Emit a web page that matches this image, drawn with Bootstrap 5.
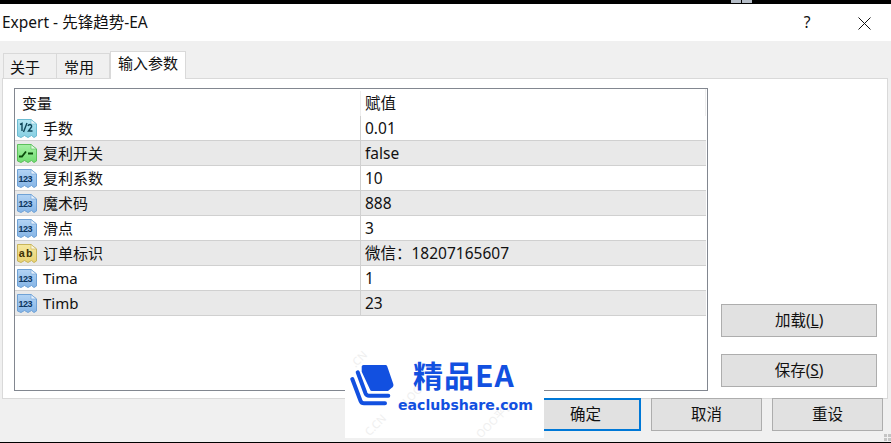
<!DOCTYPE html>
<html lang="zh">
<head>
    <meta charset="UTF-8">
    <title>Expert</title>
    <link href="https://cdn.jsdelivr.net/npm/bootstrap@5.3.2/dist/css/bootstrap.min.css" rel="stylesheet"/>
    <style>
        html, body { height: 443px; overflow: hidden; }
        body {
            background: #000;
            padding: 4px 0 1px;
            font-family: "Noto Sans", "Noto Sans CJK SC", sans-serif;
            font-size: 15px;
            color: #111;
            position: relative;
        }
        .dlg { height: 438px; background: #f0f0f0; display: flex; flex-direction: column; }
        .dlg-title { height: 37px; background: #fff; font-size: 15.5px; padding-left: 2px; }
        .dlg-help { width: 60px; text-align: center; }
        .dlg-close { width: 54px; text-align: center; }
        .dlg-tabs { height: 25px; margin-top: 12px; padding-left: 3px; }
        .dlg-tab { height: 25px; padding: 2px 0 0 7px; background: #f0f0f0; border: 1px solid #d9d9d9; border-bottom: 0; width: 54px; }
        .dlg-tab:first-child { padding-left: 6px; }
        .dlg-tab + .dlg-tab { margin-left: -1px; }
        .dlg-tab.on { background: #fff; padding-top: 0; height: 28px; width: 76px; margin-top: -2px; z-index: 1; margin-left: 0; }
        .dlg-panel { height: 321px; margin: 0 3px 0 2px; background: #fff; border: 1px solid #d9d9d9; padding: 9px 10px 7px 11px; gap: 13px; }
        .grid-box { width: 695px; border: 1px solid #828790; padding-right: 1px; display: flex; flex-direction: column; }
        .grid-row { height: 25px; display: flex; align-items: center; border-bottom: 1px solid #d0d0d0; flex: none; }
        .grid-row.alt { background: #e9e9e9; }
        .grid-row.head { height: 27px; border-bottom: 0; padding-top: 2px; border-right: 1px solid #eee; }
        .cell-a { width: 346px; height: 100%; display: flex; align-items: center; border-right: 1px solid #d0d0d0; flex: none; gap: 4px; }
        .head .cell-a { padding-left: 7px; border-right-color: #eee; }
        .cell-b { padding: 1px 0 0 4px; font-size: 15.5px; }
        .head .cell-b { padding-top: 0; }
        .ico { width: 24px; height: 22px; flex: none; }
        .side-btns { width: 156px; padding-top: 216px; gap: 17px; }
        .win-btn { background: #e1e1e1; border: 1px solid #adadad; height: 33px; line-height: 29px; text-align: center; width: 100%; padding: 0; color: #111; font-size: 15.5px; }
        .foot-btns { margin-top: -1px; padding-right: 8px; gap: 10px; justify-content: flex-end; }
        .foot-btns .win-btn { width: 111px; }
        .win-btn.def { border: 2px solid #0078d7; line-height: 27px; }
        .wm { position: absolute; left: 345px; top: 345px; width: 199px; height: 93px; background: #fff; color: #1250e0; }
        .wm-cn { position: absolute; left: 68px; top: 9px; font-family: "Noto Sans CJK SC", sans-serif; font-weight: 700; font-size: 30px; line-height: 40px; letter-spacing: 1px; }
        .wm-url { position: absolute; left: 53px; top: 50px; font-family: "DejaVu Sans", sans-serif; font-weight: 700; font-size: 14.1px; line-height: 20px; }
        .wm svg { position: absolute; left: 5px; top: 18px; }
        .wm-faint { position: absolute; color: #efefef; font-size: 11px; transform: rotate(-45deg); line-height: 12px; }
        .wm-f1 { left: 5px; top: 8px; }
        .wm-f2 { left: 18px; top: 74px; }
        .wm-f3 { left: 56px; top: 44px; }
        .wm-f4 { left: 126px; top: 68px; }
        .grip { position: absolute; right: 0; bottom: 2px; width: 7px; height: 7px; }
        .top-bit { position: absolute; top: 0; height: 3px; width: 10px; background: #b4bcc6; }
    </style>
</head>
<body>

<span class="top-bit" style="left: 731px"></span>
<span class="top-bit" style="left: 742px"></span>

<div class="dlg">
    <!-- title bar -->
    <div class="dlg-title d-flex align-items-center justify-content-between">
        <span>Expert - 先锋趋势-EA</span>
        <div class="d-flex">
            <span class="dlg-help">?</span>
            <span class="dlg-close">
                <svg width="13" height="13" viewBox="0 0 13 13"><path d="M.5 .5L12.5 12.5M12.5 .5L.5 12.5" stroke="#111" fill="none"/></svg>
            </span>
        </div>
    </div>

    <!-- tabs -->
    <div class="dlg-tabs d-flex">
        <div class="dlg-tab">关于</div>
        <div class="dlg-tab">常用</div>
        <div class="dlg-tab on">输入参数</div>
    </div>

    <div class="dlg-panel d-flex">
        <div class="grid-box" id="grid">
            <div class="grid-row head">
                <div class="cell-a">变量</div>
                <div class="cell-b">赋值</div>
            </div>
        </div>
        <div class="side-btns d-flex flex-column">
            <button class="win-btn">加载(<u>L</u>)</button>
            <button class="win-btn">保存(<u>S</u>)</button>
        </div>
    </div>

    <div class="foot-btns d-flex">
        <button class="win-btn def">确定</button>
        <button class="win-btn">取消</button>
        <button class="win-btn">重设</button>
    </div>
</div>

<!-- watermark logo -->
<div class="wm">
    <span class="wm-faint wm-f1">.CN</span>
    <span class="wm-faint wm-f2">C.CN</span>
    <span class="wm-faint wm-f3">LOO</span>
    <span class="wm-faint wm-f4">OOO平台</span>
    <svg width="45" height="44" viewBox="0 0 45 44">
        <path d="M11.7 3.5Q11.7 2 13.5 2H35.5Q36.7 2 37.2 3.2L43.3 21Q44 23.7 41.5 25L38 28H22Q20.5 28 20 26.5L11.7 8.7Z" fill="#1250e0"/>
        <path d="M7.7 9.3L15.6 30.5Q16.5 32.7 19 32.7H38.3" stroke="#1250e0" stroke-width="4" stroke-linecap="round" stroke-linejoin="round" fill="none"/>
        <path d="M2.3 16L10.6 38Q11.5 40.3 14 40.3H35" stroke="#1250e0" stroke-width="4" stroke-linecap="round" stroke-linejoin="round" fill="none"/>
    </svg>
    <div class="wm-cn">精品EA</div>
    <div class="wm-url">eaclubshare.com</div>
</div>

<svg class="grip" viewBox="0 0 7 7"><path d="M0 0h3v3H0zM4 0h3v3H4zM0 4h3v3H0zM4 4h3v3H4z" fill="#c4c4c4"/></svg>

<script>
    // one row per input parameter: [icon, name, value]
    const params = [
        ["frac", "手数", "0.01"],
        ["bool", "复利开关", "false"],
        ["num", "复利系数", "10"],
        ["num", "魔术码", "888"],
        ["num", "滑点", "3"],
        ["str", "订单标识", "微信：18207165607"],
        ["num", "Tima", "1"],
        ["num", "Timb", "23"]
    ];

    const iconStyle = {
        frac: { top: "#b4e6f2", low: "#86cfe2", edge: "#6dbcd2", ink: "#0f4658" },
        bool: { top: "#a6f0a6", low: "#6fdc6f", edge: "#5cbf5c", ink: "#0a4a0a" },
        num:  { top: "#b4d4f4", low: "#84b4e6", edge: "#6fa2d6", ink: "#0c3560" },
        str:  { top: "#f6e8a0", low: "#e8d272", edge: "#c8b45a", ink: "#3f3406" }
    };

    function iconSvg(kind, i) {
        const s = iconStyle[kind];
        let ink;
        if (kind === "frac") {
            ink = `<path d="M5 7.5L7 6.5V14M8.5 15L12 6M13 9Q13.5 7.5 15 7.5Q17 7.8 16.5 10L13.5 14H17.5" stroke="${s.ink}" stroke-width="1.4" fill="none"/>`;
        } else if (kind === "bool") {
            ink = `<path d="M4 14.5H7L11 9.5M13 11.5H18" stroke="${s.ink}" stroke-width="1.8" fill="none"/>`;
        } else if (kind === "str") {
            ink = `<text x="10.5" y="15" font-size="11" font-weight="700" font-family="Liberation Mono" text-anchor="middle" fill="${s.ink}" textLength="14">ab</text>`;
        } else {
            ink = `<text x="10.5" y="15" font-size="9" font-weight="700" font-family="Liberation Sans" text-anchor="middle" fill="${s.ink}" textLength="14">123</text>`;
        }
        return `<svg class="ico" viewBox="0 0 24 22">
            <defs><linearGradient id="g${i}" x1="0" y1="0" x2="0" y2="1"><stop offset="0" stop-color="${s.top}"/><stop offset="1" stop-color="${s.low}"/></linearGradient></defs>
            <path d="M2.5 2.5H16L21.5 7V19L19 20.5L16.5 18.5L13 20.5L9.5 18.5L6 20.5L2.5 19Z" fill="url(#g${i})" stroke="${s.edge}"/>
            <path d="M16 2.5V7H21.5Z" fill="#fff" fill-opacity=".7" stroke="${s.edge}" stroke-width=".6"/>
            ${ink}
        </svg>`;
    }

    const grid = document.getElementById("grid");
    params.forEach(function (p, i) {
        grid.insertAdjacentHTML("beforeend", `
            <div class="grid-row ${i % 2 ? "alt" : ""}">
                <div class="cell-a">${iconSvg(p[0], i)}<span>${p[1]}</span></div>
                <div class="cell-b">${p[2]}</div>
            </div>
        `);
    });
</script>

</body>
</html>
